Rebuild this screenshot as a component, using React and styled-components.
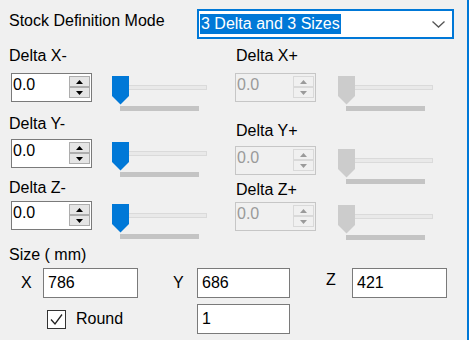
import styled, { createGlobalStyle } from "styled-components";

const GlobalStyle = createGlobalStyle`
  body {
    margin: 0;
    background: #f0f0f0;
    font-family: "Liberation Sans", Arial, sans-serif;
  }
`;

const columns = [
  [
    { label: "Delta X-", top: 8, gap: 8 },
    { label: "Delta Y-", top: 4, gap: 6 },
    { label: "Delta Z-", top: 2, gap: 4 },
  ],
  [
    { label: "Delta X+", top: 8, gap: 8, disabled: true },
    { label: "Delta Y+", top: 11, gap: 6, disabled: true },
    { label: "Delta Z+", top: -3, gap: 3, disabled: true },
  ],
];

const Arrow = ({ up, color }) => (
  <svg width="7" height="4" viewBox="0 0 7 4">
    <polygon points={up ? "0,4 7,4 3.5,0" : "0,0 7,0 3.5,4"} fill={color} />
  </svg>
);

const SpinBox = ({ disabled }) => (
  <SpinFrame $disabled={disabled}>
    <SpinValue $disabled={disabled}>0.0</SpinValue>
    <SpinButtons>
      <SpinButton $disabled={disabled}>
        <Arrow up color={disabled ? "#9a9a9a" : "#000"} />
      </SpinButton>
      <SpinButton $disabled={disabled}>
        <Arrow color={disabled ? "#9a9a9a" : "#000"} />
      </SpinButton>
    </SpinButtons>
  </SpinFrame>
);

const Slider = ({ disabled, gap }) => (
  <SliderBody $gap={gap}>
    <Track />
    <Ticks />
    <Thumb width="17" height="29" viewBox="0 0 17 29">
      <polygon
        points="0,0 17,0 17,20 8.5,28.5 0,20"
        fill={disabled ? "#cccccc" : "#0078d7"}
      />
    </Thumb>
  </SliderBody>
);

const App = () => {
  return (
    <Page>
      <GlobalStyle />
      <ModeRow>
        <ModeLabel>Stock Definition Mode</ModeLabel>
        <Combo>
          <Selected>3 Delta and 3 Sizes</Selected>
          <svg width="13" height="7" viewBox="0 0 13 7">
            <polyline
              points="0.5,0.5 6.5,6 12.5,0.5"
              fill="none"
              stroke="#555"
              strokeWidth="1.3"
            />
          </svg>
        </Combo>
      </ModeRow>

      <DeltaGrid>
        {columns.map((groups, i) => (
          <Column key={i}>
            {groups.map((g) => (
              <Group key={g.label} $top={g.top}>
                <GroupLabel>{g.label}</GroupLabel>
                <ControlRow $gap={g.gap} $inset={g.disabled ? -1 : 2}>
                  <SpinBox disabled={g.disabled} />
                  <Slider disabled={g.disabled} gap={g.disabled ? 22 : 20} />
                </ControlRow>
              </Group>
            ))}
          </Column>
        ))}
      </DeltaGrid>

      <SizeLabel>Size ( mm)</SizeLabel>
      <SizeRow>
        <AxisLabel $left={12} $width={22} $offset={6}>X</AxisLabel>
        <TextBox $width={95}>786</TextBox>
        <AxisLabel $left={35} $width={24} $offset={6}>Y</AxisLabel>
        <TextBox $width={93}>686</TextBox>
        <AxisLabel $left={36} $width={26} $offset={3}>Z</AxisLabel>
        <TextBox $width={95}>421</TextBox>
      </SizeRow>
      <RoundRow>
        <CheckField>
          <CheckBox>
            <svg width="17" height="17" viewBox="0 0 17 17">
              <polyline
                points="3,8.5 7,13 14,3.5"
                fill="none"
                stroke="#222"
                strokeWidth="1.3"
              />
            </svg>
          </CheckBox>
          <CheckText>Round</CheckText>
        </CheckField>
        <TextBox $width={93}>1</TextBox>
      </RoundRow>
    </Page>
  );
};

export default App;

// CSS

const Page = styled.div`
  width: 469px;
  height: 340px;
  box-sizing: border-box;
  padding: 9px 0 0 9px;
  border-right: 2px solid #0078d7;
  background: #f0f0f0;
  color: #000;
  font-size: 16px;
  overflow: hidden;
`;

const ModeRow = styled.div`
  display: flex;
  align-items: flex-start;
  height: 30px;
`;

const ModeLabel = styled.div`
  width: 188px;
  padding-top: 3px;
  line-height: 18px;
`;

const Combo = styled.div`
  width: 257px;
  height: 30px;
  box-sizing: border-box;
  border: 2px solid #0078d7;
  background: #fff;
  display: flex;
  align-items: center;
  justify-content: space-between;
  padding: 0 7px 0 1px;
`;

const Selected = styled.span`
  background: #0078d7;
  color: #fff;
  line-height: 20px;
  padding: 0 1px;
`;

const DeltaGrid = styled.div`
  display: grid;
  grid-template-columns: 227px 1fr;
`;

const Column = styled.div`
  display: flex;
  flex-direction: column;
`;

const Group = styled.div`
  margin-top: ${(p) => p.$top}px;
`;

const GroupLabel = styled.div`
  line-height: 18px;
`;

const ControlRow = styled.div`
  display: flex;
  align-items: flex-start;
  margin: ${(p) => p.$gap}px 0 0 ${(p) => p.$inset}px;
`;

const SpinFrame = styled.div`
  width: 81px;
  height: 29px;
  box-sizing: border-box;
  border: 1px solid ${(p) => (p.$disabled ? "#c6c6c6" : "#7a7a7a")};
  background: ${(p) => (p.$disabled ? "#f0f0f0" : "#fff")};
  display: flex;
  justify-content: space-between;
  padding: 2px 1px 1px 1px;
`;

const SpinValue = styled.div`
  line-height: 18px;
  color: ${(p) => (p.$disabled ? "#9a9a9a" : "#000")};
`;

const SpinButtons = styled.div`
  display: flex;
  flex-direction: column;
  width: 21px;
`;

const SpinButton = styled.div`
  height: 11px;
  box-sizing: border-box;
  border: 1px solid ${(p) => (p.$disabled ? "#d9d9d9" : "#adadad")};
  background: ${(p) => (p.$disabled ? "#f0f0f0" : "#e5e5e5")};
  display: flex;
  align-items: center;
  justify-content: center;
`;

const SliderBody = styled.div`
  position: relative;
  width: 95px;
  height: 35px;
  margin: 3px 0 0 ${(p) => p.$gap}px;
  display: flex;
  flex-direction: column;
`;

const Track = styled.div`
  margin: 9px 0 0 4px;
  height: 5px;
  box-sizing: border-box;
  border: 1px solid #dadada;
  background: #e9e9e9;
`;

const Ticks = styled.div`
  margin: 16px 0 0 8px;
  width: 79px;
  height: 5px;
  background: #c4c4c4;
`;

const Thumb = styled.svg`
  position: absolute;
  left: 0;
  top: 0;
`;

const SizeLabel = styled.div`
  margin-top: 6px;
  line-height: 18px;
`;

const SizeRow = styled.div`
  display: flex;
  align-items: flex-start;
  margin-top: 4px;
`;

const AxisLabel = styled.div`
  margin-left: ${(p) => p.$left}px;
  width: ${(p) => p.$width}px;
  padding-top: ${(p) => p.$offset}px;
  line-height: 18px;
`;

const TextBox = styled.div`
  width: ${(p) => p.$width}px;
  height: 30px;
  box-sizing: border-box;
  border: 1px solid #7a7a7a;
  background: #fff;
  padding: 5px 0 0 4px;
  line-height: 18px;
`;

const RoundRow = styled.div`
  display: flex;
  align-items: center;
  margin-top: 6px;
`;

const CheckField = styled.div`
  width: 188px;
  box-sizing: border-box;
  padding-left: 38px;
  display: flex;
  align-items: center;
`;

const CheckBox = styled.div`
  width: 19px;
  height: 19px;
  box-sizing: border-box;
  border: 1px solid #333;
  background: #fff;
`;

const CheckText = styled.span`
  margin-left: 10px;
  line-height: 18px;
`;
